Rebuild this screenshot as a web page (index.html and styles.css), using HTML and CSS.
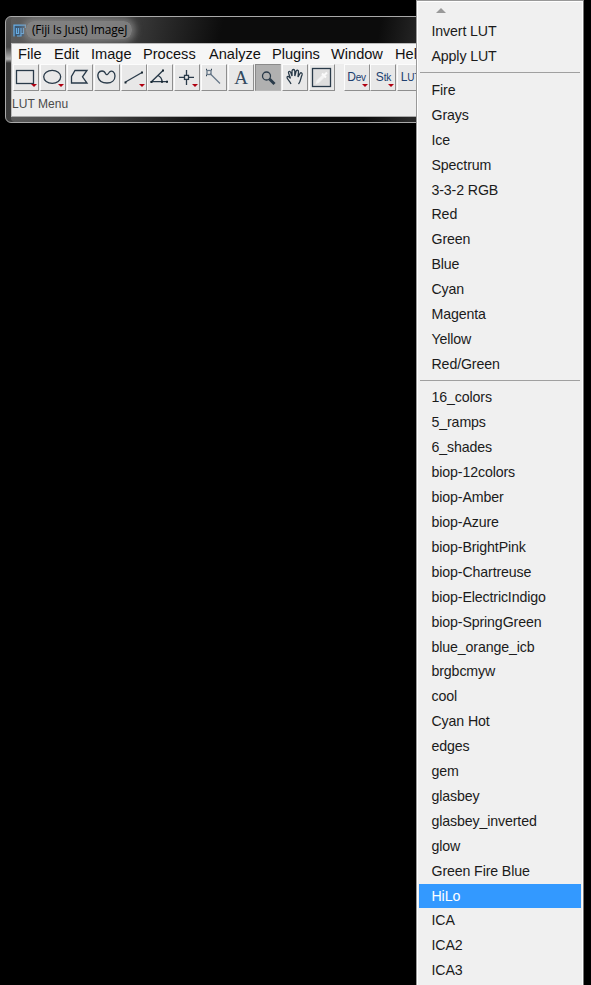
FILE: index.html
```
<!DOCTYPE html>
<html lang="en">
<head>
<meta charset="utf-8">
<title>(Fiji Is Just) ImageJ</title>
<link rel="stylesheet" href="styles.css">
</head>
<body>
<main class="desktop">
  <section class="window">
    <header class="titlebar">
      <svg class="logo" width="13" height="13" viewBox="0 0 13 13"><rect x="1" y="1" width="10" height="11" fill="#3a5874"/><path d="M1 12.500V1.200H12.500V4M3.500 10V4M5.500 4V9.500H3.500M8 4V12H4M10.500 4V9.500H8" fill="none" stroke="#68aee6" stroke-width="1.200"/></svg>
      <span class="title">(Fiji Is Just) ImageJ</span>
    </header>
    <div class="client">
      <nav class="menubar">
        <span class="w-file">File</span><span class="w-edit">Edit</span><span class="w-image">Image</span><span class="w-process">Process</span><span class="w-analyze">Analyze</span><span class="w-plugins">Plugins</span><span class="w-window">Window</span><span class="w-help">Help</span>
      </nav>
      <div class="toolbar">
        <button class="tool more"><svg viewBox="0 0 26 27"><rect x="3.5" y="6.5" width="17" height="13"/></svg></button>
        <button class="tool more"><svg viewBox="0 0 26 27"><ellipse cx="12.2" cy="12.8" rx="8.5" ry="6.5"/></svg></button>
        <button class="tool"><svg viewBox="0 0 26 27"><path d="M8 6.5H20L15.5 12.8L20 19H4.500V12.500Z"/></svg></button>
        <button class="tool"><svg viewBox="0 0 26 27"><path d="M8 7C4.500 7 3.500 10 4 13C5 17 9 19 13 19C18 19 21 16 21 12C21 8 18 6 15.500 8C13.500 11 12.500 11.500 11.500 9.500Q10.500 7 8 7Z"/></svg></button>
        <button class="tool more"><svg viewBox="0 0 26 27"><path d="M4.500 18L21 8.500"/><path class="fill" d="M3.500 17.500h2v2h-2zM20 7.500h2v2h-2z"/></svg></button>
        <button class="tool"><svg viewBox="0 0 26 27"><path d="M16 6.500L4.500 17.700H20M11 11.500Q15 13.500 15 17.500"/><path class="fill" d="M15 5.500h2v2H15zM3.500 17h2v2h-2zM19 16.700h2v2h-2zM14 16.700h2v2H14z"/></svg></button>
        <button class="tool more"><svg viewBox="0 0 26 27"><path d="M12.500 6V11M12.500 16V21M5 13.400H10M15 13.400H20"/><rect x="10.500" y="11.400" width="4" height="4"/></svg></button>
        <button class="tool"><svg viewBox="0 0 26 27"><path class="wand" d="M9 9.500L19 19.500"/><rect class="wand" x="6" y="6.500" width="4" height="4"/><path class="dots" d="M5 5.500h1M10 5.500h1M5 11.500h1"/></svg></button>
        <button class="tool letter">A</button>
        <button class="tool pressed"><svg viewBox="0 0 26 27"><circle cx="11.500" cy="12" r="4"/><path d="M14.500 15L19.500 20" stroke-width="3"/></svg></button>
        <button class="tool"><svg viewBox="0 0 26 27"><path d="M9 20C8 17 4.500 15 5 13C6 11.500 7.500 13 8.500 14.500L6.500 9C6.500 6.500 8.500 7 9 9L10 12L10 7C10.500 5 12.500 5 12.800 7V12L14 7.500C14.500 5.500 16.700 6 16.500 8L16 13L18 9.500C19 8 20.800 9 20 11C18.500 14 19 17 16.500 20"/></svg></button>
        <button class="tool"><svg viewBox="0 0 26 27"><rect x="3.500" y="4.500" width="18" height="18" fill="#dedede"/><path class="dropper" d="M7 19.500L8 16.500L13.500 11L15.500 13L10 18.500Z"/><path class="dropper-cap" d="M13 9.500L17 13.500M15.500 11L18 8.500"/></svg></button>
        <span class="gap"></span>
        <button class="tool more word">D<small>ev</small></button>
        <button class="tool more word">S<small>tk</small></button>
        <button class="tool word lut">L<small>UT</small></button>
      </div>
      <div class="status">LUT Menu</div>
    </div>
  </section>
  <aside class="menu">
    <div class="scroll"><i class="up"></i></div>
    <ul>
      <li>Invert LUT</li><li>Apply LUT</li>
      <li class="sep"></li>
      <li>Fire</li><li>Grays</li><li>Ice</li><li>Spectrum</li><li>3-3-2 RGB</li><li>Red</li><li>Green</li><li>Blue</li><li>Cyan</li><li>Magenta</li><li>Yellow</li><li>Red/Green</li>
      <li class="sep"></li>
      <li>16_colors</li><li>5_ramps</li><li>6_shades</li><li>biop-12colors</li><li>biop-Amber</li><li>biop-Azure</li><li>biop-BrightPink</li><li>biop-Chartreuse</li><li>biop-ElectricIndigo</li><li>biop-SpringGreen</li><li>blue_orange_icb</li><li>brgbcmyw</li><li>cool</li><li>Cyan Hot</li><li>edges</li><li>gem</li><li>glasbey</li><li>glasbey_inverted</li><li>glow</li><li>Green Fire Blue</li><li class="selected">HiLo</li><li>ICA</li><li>ICA2</li><li>ICA3</li>
    </ul>
  </aside>
</main>
</body>
</html>
```
FILE: styles.css
```
* { box-sizing: border-box; }
body { margin: 0; background: #000; font-family: "Liberation Sans", Arial, sans-serif; }
.desktop { position: relative; width: 591px; height: 985px; overflow: hidden; }
.window {
  position: absolute; left: 5px; top: 16px; width: 420px; height: 107px;
  padding: 1px 0 5px 5px; border: 1px solid #a9a9a9; border-radius: 6px; overflow: hidden;
  background: linear-gradient(#555 0, #484848 30px, #b5b5b5 42px, #383838 46px, #3b3b3b 100%);
}
.window::before {
  content: ""; position: absolute; inset: 0 0 0 5px; border-radius: 4px;
  background: linear-gradient(100deg, #5c5c5c 0, #4c4c4c 90px, #2b2b2b 150px, #0c0c0c 210px, #0c0c0c 365px, #292929 410px);
}
.titlebar { position: relative; height: 25px; display: flex; align-items: center; padding-left: 2px; }
.logo { margin-right: 5px; }
.title {
  font: 12px/17px "Open Sans", "Noto Sans", sans-serif; letter-spacing: -.18px; color: #000;
  padding: 0 5px 1px 6px; margin: -2px 0 0 -5px; border-radius: 8px; white-space: nowrap;
  background: rgba(140, 140, 140, .8); box-shadow: 0 0 7px 3px rgba(140, 140, 140, .75);
}
.client { position: relative; height: 74px; border: 1px solid #bbb; border-bottom-color: #aaa; background: #ededed; overflow: hidden; }
.menubar { display: flex; height: 20px; padding-left: 6px; background: #f6f6f6; font-size: 14.600px; line-height: 20px; color: #111; }
.menubar span { flex: none; }
.w-file { width: 36px; } .w-edit { width: 37px; } .w-image { width: 52px; } .w-process { width: 66px; }
.w-analyze { width: 63px; } .w-plugins { width: 59px; } .w-window { width: 64px; }
.toolbar { display: flex; gap: .9px; height: 28px; padding-left: 1px; }
.tool {
  position: relative; flex: none; width: 26px; height: 27px; padding: 0; margin: 0;
  border: 1px solid; border-color: #fcfcfc #8e8e8e #8e8e8e #fcfcfc; background: #e8e8e8;
  font-family: inherit; color: #29415a;
}
.tool svg { display: block; width: 26px; height: 27px; margin: -1px; fill: none; stroke: #293a49; stroke-width: 1.3; }
.tool svg .fill { fill: #172631; stroke: none; }
.tool svg .wand { stroke: #667788; }
.tool svg .dots { stroke: #334455; }
.tool svg .dropper { fill: #f4f4f4; stroke: #f4f4f4; stroke-width: .6; }
.tool svg .dropper-cap { stroke: #fafafa; stroke-width: 2; }
.more::after {
  content: ""; position: absolute; right: 1px; bottom: 3px;
  border: 2.5px solid transparent; border-top: 3px solid #b00010; border-bottom: 0;
}
.more::after { border-width: 3px 3px 0; }
.pressed { background: #b0b0b0; border-color: #8a8a8a #b8b8b8 #b8b8b8 #8a8a8a; }
.letter { font: 19px/24px "Liberation Serif", serif; color: #334a60; }
.word { font-size: 12px; line-height: 23px; color: #20406f; letter-spacing: -.2px; }
.word small { font-size: 10px; }
.gap { flex: none; width: 7px; }
.status { padding-top: 4px; font-size: 12px; line-height: 16px; letter-spacing: .05px; color: #4b4b4b; }
.menu {
  position: absolute; left: 416px; top: 0; width: 168px; height: 990px;
  border: 1px solid #999; border-right-color: #777; background: #f0f0f0; padding: 0 2px;
  box-shadow: inset 1px 1px #fff, inset -1px 0 #fff;
}
.scroll { height: 18.400px; padding: 7px 0 0 17px; }
.up { display: block; width: 0; border: 5px solid transparent; border-bottom: 5px solid #999; border-top: 0; }
.menu ul { list-style: none; margin: 0; padding: 0; }
.menu li { height: 24.910px; padding-left: 12.5px; font-size: 14.200px; line-height: 25px; letter-spacing: -.13px; color: #1b1b1b; white-space: nowrap; }
.menu li.sep { height: 8.7px; padding: 3px 0 0; }
.menu li.sep::before { content: ""; display: block; height: 1px; margin: 0 1px; background: #a0a0a0; }
.menu li.selected { background: #3399ff; color: #fff; }
```
